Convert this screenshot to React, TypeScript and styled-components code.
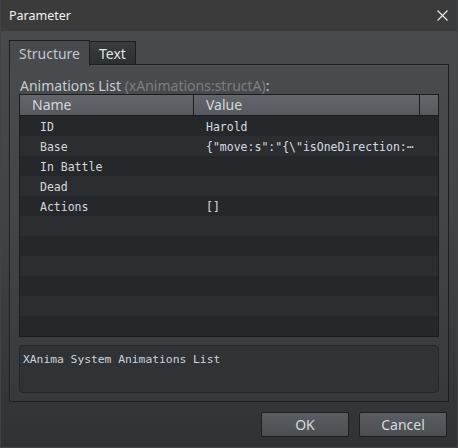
import styled, { createGlobalStyle } from 'styled-components'

const GlobalStyle = createGlobalStyle`
	html, body {
		margin: 0;
		padding: 0;
		background: #2f3336;
	}
	* {
		box-sizing: border-box;
	}
`

const rows = [
	{ name: 'ID', value: 'Harold' },
	{ name: 'Base', value: '{"move:s":"{\\"isOneDirection:\u22ef' },
	{ name: 'In Battle', value: '' },
	{ name: 'Dead', value: '' },
	{ name: 'Actions', value: '[]' },
	{ name: '', value: '' },
	{ name: '', value: '' },
	{ name: '', value: '' },
	{ name: '', value: '' },
	{ name: '', value: '' },
	{ name: '', value: '' },
]

const App = () => {
	return (
		<>
			<GlobalStyle />
			<Window>
				<TitleBar>
					<Title>Parameter</Title>
					<CloseButton>
						<svg width='11' height='11' viewBox='0 0 11 11'>
							<path d='M0.5 0.5 L10.5 10.5 M10.5 0.5 L0.5 10.5' stroke='#e6e6e6' strokeWidth='1.2' />
						</svg>
					</CloseButton>
				</TitleBar>
				<Body>
					<Tabs>
						<Tab $active>Structure</Tab>
						<Tab>Text</Tab>
					</Tabs>
					<Panel>
						<ListLabel>
							Animations List <Hint>(xAnimations:structA)</Hint>:
						</ListLabel>
						<Table>
							<HeaderRow>
								<HeaderCell>Name</HeaderCell>
								<HeaderCell>Value</HeaderCell>
								<HeaderCell />
							</HeaderRow>
							{rows.map((row, i) => (
								<Row key={i} $odd={i % 2 === 1}>
									<NameCell>{row.name}</NameCell>
									<ValueCell>{row.value}</ValueCell>
								</Row>
							))}
						</Table>
						<Description>XAnima System Animations List</Description>
					</Panel>
					<Footer>
						<Button>OK</Button>
						<Button>Cancel</Button>
					</Footer>
				</Body>
			</Window>
		</>
	)
}

export default App

const Window = styled.div`
	width: 458px;
	height: 448px;
	display: flex;
	flex-direction: column;
	border: 1px solid #414447;
	border-top: none;
	font-family: 'Noto Sans', 'Open Sans', sans-serif;
`

const TitleBar = styled.div`
	height: 31px;
	display: flex;
	align-items: center;
	justify-content: space-between;
	background: #3b3b3b;
	padding: 0 9px 0 8px;
	flex-shrink: 0;
`

const Title = styled.span`
	color: #f2f2f2;
	font-size: 12.5px;
`

const CloseButton = styled.div`
	display: flex;
	align-items: center;
	margin-top: -1px;
`

const Body = styled.div`
	flex: 1;
	display: flex;
	flex-direction: column;
	padding: 9px 8px 0 8px;
	background: linear-gradient(180deg, #484b4e 0%, #404447 45%, #2f3336 100%);
`

const Tabs = styled.div`
	display: flex;
	height: 25px;
	position: relative;
	z-index: 1;
	margin-bottom: -1px;
`

const Tab = styled.div<{ $active?: boolean }>`
	display: flex;
	align-items: center;
	padding: 0 9px 0 9px;
	font-size: 14px;
	border: 1px solid #1c1f21;
	border-bottom: ${p => (p.$active ? 'none' : '1px solid #1c1f21')};
	color: ${p => (p.$active ? '#c3c7cb' : '#e2e4e6')};
	background: ${p => (p.$active ? '#474b4e' : 'linear-gradient(180deg, #3a3d40, #2d3033)')};
	height: ${p => (p.$active ? '26px' : '24px')};
	margin-top: ${p => (p.$active ? '0' : '1px')};
	& + & {
		border-left: none;
	}
`

const Panel = styled.div`
	height: 338px;
	display: flex;
	flex-direction: column;
	border: 1px solid #1c1f21;
	background: rgba(255, 255, 255, 0.015);
	box-shadow: inset 1px 1px 0 rgba(255, 255, 255, 0.03);
	padding: 13px 9px 8px 9px;
`

const ListLabel = styled.div`
	height: 16px;
	line-height: 16px;
	font-size: 14px;
	color: #c9cdd1;
	padding-left: 1px;
	white-space: nowrap;
`

const Hint = styled.span`
	color: #7b7f83;
`

const Table = styled.div`
	border: 1px solid #1a1c1e;
	background: #25282b;
	display: flex;
	flex-direction: column;
`

const HeaderRow = styled.div`
	display: grid;
	grid-template-columns: 174px 226px 1fr;
	height: 21px;
	border-bottom: 1px solid #1a1c1e;
	background: linear-gradient(180deg, #63676b, #56595d);
`

const HeaderCell = styled.div`
	font-size: 14px;
	color: #d4d7da;
	line-height: 20px;
	padding-left: 12px;
	border-right: 1px solid #1a1c1e;
	&:last-child {
		border-right: none;
	}
`

const Row = styled.div<{ $odd: boolean }>`
	display: grid;
	grid-template-columns: 174px 1fr;
	height: 20px;
	align-items: center;
	padding-top: 1px;
	background: ${p => (p.$odd ? '#2b2e31' : '#25282b')};
	font-family: 'DejaVu Sans Mono', monospace;
	font-size: 11.5px;
`

const NameCell = styled.div`
	padding-left: 20px;
	color: #d6d8da;
	white-space: nowrap;
`

const ValueCell = styled.div`
	padding-left: 12px;
	color: #d6dce2;
	white-space: nowrap;
	overflow: hidden;
`

const Description = styled.div`
	margin-top: 8px;
	height: 48px;
	border: 1px solid #24272a;
	border-radius: 4px;
	background: #303336;
	padding: 7px 3px;
	font-family: 'DejaVu Sans Mono', monospace;
	font-size: 11.3px;
	color: #cdd5de;
`

const Footer = styled.div`
	display: flex;
	justify-content: flex-end;
	gap: 10px;
	padding: 10px 2px 0 0;
`

const Button = styled.button`
	width: 88px;
	height: 25px;
	border: 1px solid #1c1f21;
	border-radius: 2px;
	background: linear-gradient(180deg, #5a5e62, #4b4f52);
	color: #d8dadc;
	font-family: 'Noto Sans', 'Open Sans', sans-serif;
	font-size: 14px;
	padding: 0;
	cursor: pointer;
`
